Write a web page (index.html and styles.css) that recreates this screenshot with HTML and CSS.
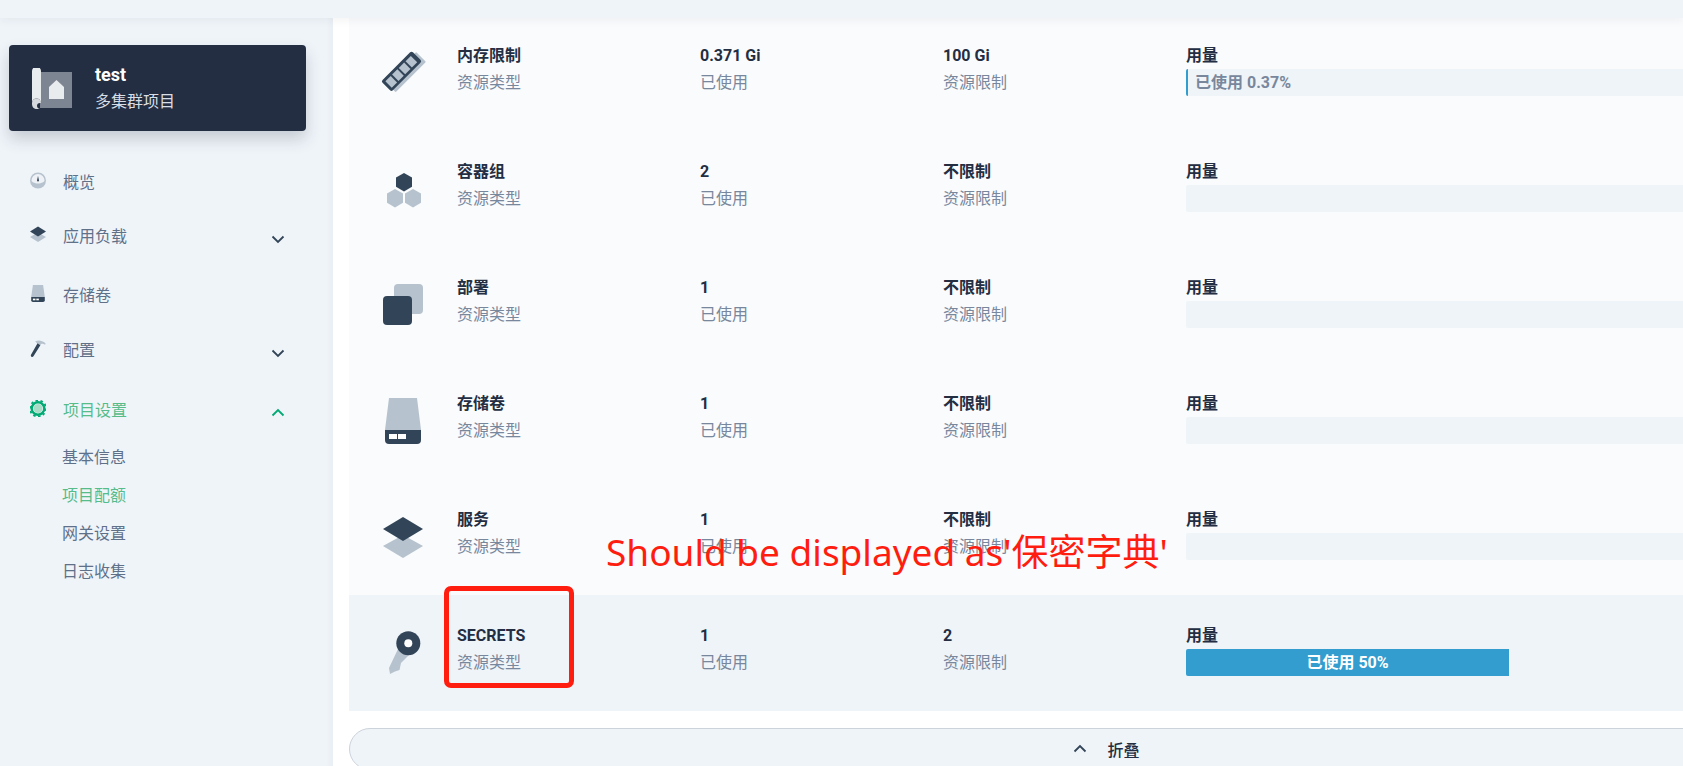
FILE: index.html
```html
<!DOCTYPE html>
<html lang="zh-CN">
<head>
  <meta charset="UTF-8" />
  <meta name="viewport" content="width=device-width, initial-scale=1.0"/>
  <title>项目配额</title>
  <link rel="stylesheet" href="styles.css">
</head>
<body>
  <div class="page">
    <div class="topbar"></div>
    <div class="layout">
      <aside class="sidebar">
        <div class="project-card">
          <svg class="project-icon" viewBox="0 0 40 41">
            <rect x="8" y="4" width="32" height="36" fill="#7d8492"/>
            <path d="M0 3a4.500 4.500 0 0 1 9 0v32a4.500 4.500 0 0 0-9 0z" fill="#e9ecee"/>
            <path d="M0 35a4.500 4.500 0 0 1 9 0h-1a3 3 0 0 0-3 3c0 2 2 3 3 3h-3c-3 0-5-2-5-5z" fill="#d5d8dc"/>
            <path d="M17 19l7.500-7 7.500 7v12h-15z" fill="#e9ecee"/>
          </svg>
          <div>
            <div class="project-name">test</div>
            <div class="project-type">多集群项目</div>
          </div>
        </div>

        <nav class="nav">
          <a class="nav-item nav-item-first">
            <svg class="nav-icon" viewBox="0 0 16 16">
              <circle cx="8" cy="8" r="8" fill="#b6c2cd"/>
              <path d="M1.500 8a6.500 6.500 0 0 1 13 0c0 1-3 3-6.500 3s-6.500-2-6.500-3z" fill="#eef2f6"/>
              <path d="M7 8l1-4.500 1 4.500a1 1 0 0 1-2 0z" fill="#324558"/>
            </svg>
            <span>概览</span>
          </a>
          <a class="nav-item nav-item-sub">
            <svg class="nav-icon" viewBox="0 0 16 16">
              <path d="M0 10.500l8-4.500 8 4.500-8 5z" fill="#b6c2cd"/>
              <path d="M0 5l8-5 8 5-8 5z" fill="#324558"/>
            </svg>
            <span>应用负载</span>
            <svg class="chevron" viewBox="0 0 16 16"><path d="M2.500 5.500l5.500 5.500 5.500-5.500"/></svg>
          </a>
          <a class="nav-item">
            <svg class="nav-icon" viewBox="0 0 16 20">
              <path d="M2 0h12l2 14H0z" fill="#b6c2cd"/>
              <path d="M0 14h16v4a2 2 0 0 1-2 2H2a2 2 0 0 1-2-2z" fill="#324558"/>
              <rect x="2" y="16" width="3" height="2" fill="#fff"/>
              <rect x="6" y="16" width="3" height="2" fill="#fff"/>
            </svg>
            <span>存储卷</span>
          </a>
          <a class="nav-item nav-item-config">
            <svg class="nav-icon" viewBox="0 0 16 18">
              <path d="M5 1.500C8 0 12 0 16 3.500l-.5 1.500C13 3.500 11.500 3.500 10.500 5.500L7 3.500z" fill="#b6c2cd"/>
              <path d="M7.500 3.500l3 2L3.200 17.300c-.5.700-1.500.900-2.200.400s-.800-1.300-.4-2z" fill="#324558"/>
            </svg>
            <span>配置</span>
            <svg class="chevron" viewBox="0 0 16 16"><path d="M2.500 5.500l5.500 5.500 5.500-5.500"/></svg>
          </a>
          <a class="nav-item active">
            <svg class="nav-icon" viewBox="0 0 16 16">
              <circle cx="8" cy="8" r="6.300" fill="none" stroke="#00aa72" stroke-width="2.400"/>
              <circle cx="8" cy="8" r="8" fill="none" stroke="#00aa72" stroke-width="1.800" stroke-dasharray="2.500 2.500"/>
              <circle cx="8" cy="8" r="4.500" fill="#a8dcc6"/>
            </svg>
            <span>项目设置</span>
            <svg class="chevron" viewBox="0 0 16 16"><path d="M2.500 10.500l5.500-5.500 5.500 5.500"/></svg>
          </a>
          <ul class="subnav">
            <li>基本信息</li>
            <li class="active">项目配额</li>
            <li>网关设置</li>
            <li>日志收集</li>
          </ul>
        </nav>
      </aside>

      <main class="content">
        <div class="quota-row">
          <svg class="row-icon" viewBox="0 0 48 48">
            <g transform="rotate(-45 22.500 22.300)">
              <rect x="3.500" y="19" width="43" height="14" rx="1" fill="#b6c2cd"/>
              <rect x="1" y="15" width="43" height="14.600" rx="2" fill="#324558"/>
              <rect x="4" y="18" width="7.500" height="9" fill="#b6c2cd"/>
              <rect x="13.500" y="18" width="7.500" height="9" fill="#b6c2cd"/>
              <rect x="23" y="18" width="7.500" height="9" fill="#b6c2cd"/>
              <rect x="32.500" y="18" width="7.500" height="9" fill="#b6c2cd"/>
            </g>
          </svg>
          <div class="cell"><div class="cell-title">内存限制</div><div class="cell-sub">资源类型</div></div>
          <div class="cell"><div class="cell-title">0.371 Gi</div><div class="cell-sub">已使用</div></div>
          <div class="cell"><div class="cell-title">100 Gi</div><div class="cell-sub">资源限制</div></div>
          <div class="cell">
            <div class="cell-title">用量</div>
            <div class="bar"><div class="bar-fill" style="width: 0.37%"></div><span class="bar-label">已使用 0.37%</span></div>
          </div>
        </div>

        <div class="quota-row">
          <svg class="row-icon" viewBox="0 0 48 48">
            <path d="M25 8l8 4.600v9.200l-8 4.600-8-4.600v-9.200z" fill="#324558"/>
            <path d="M16 24l8 4.600v9.200l-8 4.600-8-4.600v-9.200z" fill="#b6c2cd"/>
            <path d="M34 24l8 4.600v9.200l-8 4.600-8-4.600v-9.200z" fill="#b6c2cd"/>
          </svg>
          <div class="cell"><div class="cell-title">容器组</div><div class="cell-sub">资源类型</div></div>
          <div class="cell"><div class="cell-title">2</div><div class="cell-sub">已使用</div></div>
          <div class="cell"><div class="cell-title">不限制</div><div class="cell-sub">资源限制</div></div>
          <div class="cell"><div class="cell-title">用量</div><div class="bar"></div></div>
        </div>

        <div class="quota-row">
          <svg class="row-icon" viewBox="0 0 48 48">
            <rect x="15" y="3" width="29" height="30" rx="4" fill="#b6c2cd"/>
            <rect x="4" y="15" width="29" height="29" rx="4" fill="#324558"/>
          </svg>
          <div class="cell"><div class="cell-title">部署</div><div class="cell-sub">资源类型</div></div>
          <div class="cell"><div class="cell-title">1</div><div class="cell-sub">已使用</div></div>
          <div class="cell"><div class="cell-title">不限制</div><div class="cell-sub">资源限制</div></div>
          <div class="cell"><div class="cell-title">用量</div><div class="bar"></div></div>
        </div>

        <div class="quota-row">
          <svg class="row-icon" viewBox="0 0 48 48">
            <path d="M10 1h28l4 32H6z" fill="#b6c2cd"/>
            <path d="M6 33h36v10a4 4 0 0 1-4 4H10a4 4 0 0 1-4-4z" fill="#324558"/>
            <rect x="10" y="37" width="8" height="5" fill="#fff"/>
            <rect x="19" y="37" width="8" height="5" fill="#fff"/>
          </svg>
          <div class="cell"><div class="cell-title">存储卷</div><div class="cell-sub">资源类型</div></div>
          <div class="cell"><div class="cell-title">1</div><div class="cell-sub">已使用</div></div>
          <div class="cell"><div class="cell-title">不限制</div><div class="cell-sub">资源限制</div></div>
          <div class="cell"><div class="cell-title">用量</div><div class="bar"></div></div>
        </div>

        <div class="quota-row">
          <svg class="row-icon" viewBox="0 0 48 48">
            <path d="M24 22l20 11-20 12L4 33z" fill="#b6c2cd"/>
            <path d="M24 4l20 12-20 12L4 16z" fill="#324558"/>
          </svg>
          <div class="cell"><div class="cell-title">服务</div><div class="cell-sub">资源类型</div></div>
          <div class="cell"><div class="cell-title">1</div><div class="cell-sub">已使用</div></div>
          <div class="cell"><div class="cell-title">不限制</div><div class="cell-sub">资源限制</div></div>
          <div class="cell"><div class="cell-title">用量</div><div class="bar"></div></div>
        </div>

        <div class="quota-row hover">
          <svg class="row-icon" viewBox="0 0 48 48">
            <path d="M19 20l11 6-8 8-1.500 7-4.500 1.500-5 2.500-1-6z" fill="#b6c2cd"/>
            <circle cx="29.300" cy="14.300" r="12" fill="#324558"/>
            <circle cx="29.300" cy="14.300" r="4" fill="#fff"/>
          </svg>
          <div class="cell"><div class="cell-title">SECRETS</div><div class="cell-sub">资源类型</div></div>
          <div class="cell"><div class="cell-title">1</div><div class="cell-sub">已使用</div></div>
          <div class="cell"><div class="cell-title">2</div><div class="cell-sub">资源限制</div></div>
          <div class="cell">
            <div class="cell-title">用量</div>
            <div class="bar"><div class="bar-fill bar-fill-text" style="width: 50%">已使用 50%</div></div>
          </div>
        </div>

        <button class="collapse-btn">
          <svg viewBox="0 0 16 16"><path d="M2.500 10.500l5.500-5.500 5.500 5.500"/></svg>
          <span>折叠</span>
        </button>
      </main>
    </div>

    <div class="note-box"></div>
    <div class="note-text">Should be displayed as'保密字典'</div>
  </div>
</body>
</html>
```

FILE: styles.css
```css
:root {
  --bg-soft: #eff4f9;
  --row-bg: #f9fbfd;
  --dark: #242e42;
  --muted: #79879c;
  --nav-text: #5f7089;
  --green: #55bc8a;
  --green-dark: #00aa72;
  --blue: #329dce;
  --red: #ff1d10;
}
* {
  box-sizing: border-box;
  margin: 0;
  padding: 0;
}
body {
  font-family: Roboto, "Noto Sans CJK SC", sans-serif;
  font-size: 16px;
  color: var(--dark);
  background: #fff;
  overflow: hidden;
}
.page {
  position: relative;
  width: 1683px;
  height: 766px;
  overflow: hidden;
}
.topbar {
  position: relative;
  z-index: 2;
  height: 18px;
  background: var(--bg-soft);
  box-shadow: 0 3px 8px rgba(36, 46, 66, 0.05);
}
.layout {
  display: flex;
}

/* sidebar */
.sidebar {
  flex: none;
  width: 333px;
  height: 748px;
  padding: 27px 27px 0 9px;
  background: var(--bg-soft);
  box-shadow: inset -8px 0 8px -8px rgba(36, 46, 66, 0.06);
}
.project-card {
  display: flex;
  align-items: center;
  gap: 23px;
  height: 86px;
  padding-left: 23px;
  background: var(--dark);
  border-radius: 4px;
  box-shadow: 0 8px 16px rgba(36, 46, 66, 0.2);
}
.project-icon {
  width: 40px;
  height: 41px;
}
.project-name {
  font-size: 18px;
  font-weight: 700;
  line-height: 24px;
  color: #fff;
}
.project-type {
  margin-top: 3px;
  line-height: 24px;
  color: #d8dee5;
}
.nav {
  margin-top: 34px;
}
.nav-item {
  display: flex;
  align-items: center;
  height: 32px;
  margin-bottom: 23px;
  padding: 0 20px 0 21px;
  color: var(--nav-text);
}
.nav-item-first {
  margin-bottom: 22px;
}
.nav-item-sub {
  margin-bottom: 27px;
}
.nav-item-config {
  margin-bottom: 28px;
}
.nav-icon {
  flex: none;
  width: 16px;
  height: 17px;
  margin-top: -1px;
  margin-right: 17px;
}
.chevron {
  flex: none;
  width: 16px;
  height: 16px;
  margin-top: 8px;
  margin-left: auto;
}
.chevron path,
.collapse-btn path {
  fill: none;
  stroke: #324558;
  stroke-width: 1.800;
}
.nav-item.active {
  margin-bottom: 0;
  color: var(--green);
}
.nav-item.active .chevron path {
  stroke: var(--green-dark);
}
.subnav {
  margin-top: 14px;
  padding-left: 53px;
  list-style: none;
}
.subnav li {
  height: 38px;
  line-height: 38px;
  color: var(--nav-text);
}
.subnav li.active {
  color: var(--green);
}

/* quota list */
.content {
  flex: none;
  width: 1514px;
  margin-top: -3px;
  margin-left: 16px;
}
.quota-row {
  display: grid;
  grid-template-columns: 108px 243px 243px 243px 1fr;
  height: 116px;
  padding-top: 29px;
  padding-right: 31px;
  background: var(--row-bg);
}
.quota-row.hover {
  background: var(--bg-soft);
}
.row-icon {
  width: 48px;
  height: 48px;
  margin-top: 5px;
  margin-left: 30px;
}
.cell-title {
  font-weight: 700;
  line-height: 24px;
}
.cell-sub {
  margin-top: 3px;
  line-height: 24px;
  color: var(--muted);
}
.bar {
  position: relative;
  height: 27px;
  margin-top: 1px;
  background: var(--bg-soft);
  border-radius: 2px;
  overflow: hidden;
}
.bar-fill {
  height: 100%;
  background: var(--blue);
}
.bar-fill-text {
  font-weight: 700;
  line-height: 27px;
  text-align: center;
  color: #fff;
}
.bar-label {
  position: absolute;
  top: 0;
  left: 9px;
  font-weight: 700;
  line-height: 27px;
  color: var(--muted);
}
.collapse-btn {
  display: flex;
  align-items: center;
  justify-content: center;
  gap: 19px;
  width: 100%;
  height: 42px;
  margin-top: 17px;
  font: inherit;
  font-weight: 500;
  color: var(--dark);
  background: var(--bg-soft);
  border: 1px solid #ccd3db;
  border-radius: 21px;
}
.collapse-btn svg {
  width: 16px;
  height: 16px;
}

/* red annotation drawn over the screenshot */
.note-box {
  position: absolute;
  top: 586px;
  left: 444px;
  width: 130px;
  height: 102px;
  border: 5px solid var(--red);
  border-radius: 7px;
}
.note-text {
  position: absolute;
  top: 524px;
  left: 606px;
  font-family: "Noto Sans", "Noto Sans CJK SC", sans-serif;
  font-size: 37px;
  line-height: 56px;
  white-space: nowrap;
  color: var(--red);
}
```
